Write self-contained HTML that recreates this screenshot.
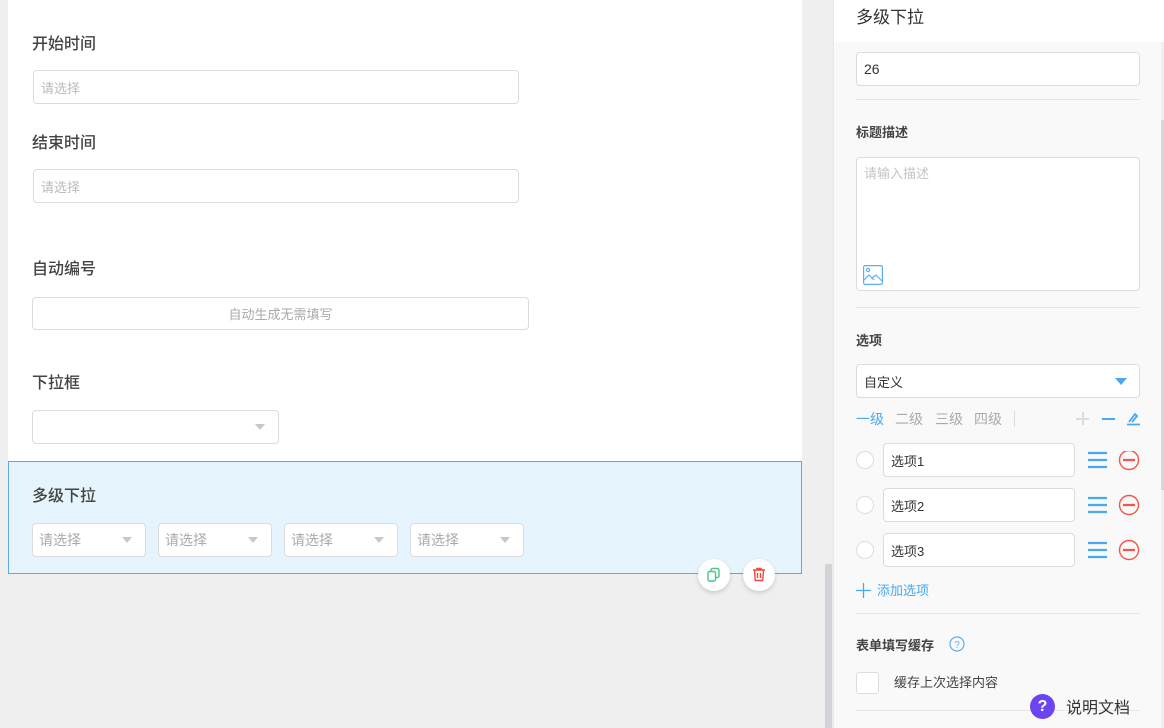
<!DOCTYPE html>
<html><head><meta charset="utf-8">
<style>
*{box-sizing:border-box;margin:0;padding:0}
body{width:1164px;height:728px;overflow:hidden;background:#efefef;font-family:"Liberation Sans","Noto Sans CJK SC",sans-serif;position:relative}
.a{position:absolute}
.lbl{position:absolute;font-size:16px;color:#444;font-weight:500}
.inp{position:absolute;background:#fff;border:1px solid #dcdcdc;border-radius:4px;font-size:13px;color:#bbb;padding-left:7px;display:flex;align-items:center}
.tri{position:absolute;width:0;height:0;border-left:5px solid transparent;border-right:5px solid transparent;border-top:6px solid #c8c8c8}
.rl{position:absolute;font-size:13px;color:#444;font-weight:bold}
.hr{position:absolute;left:856px;width:284px;height:1px;background:#e6e6e6}
</style></head><body>
<div class="a" style="left:8px;top:0;width:794px;height:461px;background:#fff"></div>
<div class="lbl" style="left:32px;top:30px">开始时间</div>
<div class="inp" style="left:33px;top:70px;width:486px;height:34px;padding-top:1px">请选择</div>
<div class="lbl" style="left:32px;top:129px">结束时间</div>
<div class="inp" style="left:33px;top:169px;width:486px;height:34px">请选择</div>
<div class="lbl" style="left:32px;top:255px">自动编号</div>
<div class="inp" style="left:32px;top:297px;width:497px;height:33px;justify-content:center;color:#aaa;padding:0">自动生成无需填写</div>
<div class="lbl" style="left:32px;top:369px">下拉框</div>
<div class="inp" style="left:32px;top:410px;width:247px;height:34px"></div>
<div class="tri" style="left:255px;top:424px"></div>

<div class="a" style="left:8px;top:461px;width:794px;height:113px;background:#e6f4fd;border:1px solid #5aa9ee"></div>
<div class="lbl" style="left:32px;top:482px">多级下拉</div>
<div class="inp" style="left:32px;top:523px;width:114px;height:34px;color:#aaa;font-size:14px;padding-left:6px">请选择</div><div class="tri" style="left:122px;top:537px"></div>
<div class="inp" style="left:158px;top:523px;width:114px;height:34px;color:#aaa;font-size:14px;padding-left:6px">请选择</div><div class="tri" style="left:248px;top:537px"></div>
<div class="inp" style="left:284px;top:523px;width:114px;height:34px;color:#aaa;font-size:14px;padding-left:6px">请选择</div><div class="tri" style="left:374px;top:537px"></div>
<div class="inp" style="left:410px;top:523px;width:114px;height:34px;color:#aaa;font-size:14px;padding-left:6px">请选择</div><div class="tri" style="left:500px;top:537px"></div>

<div class="a" style="left:698px;top:559px;width:32px;height:32px;border-radius:50%;background:#fff;box-shadow:0 2px 5px rgba(0,0,0,.15)">
<svg width="32" height="32" viewBox="0 0 32 32"><rect x="13" y="9.5" width="8" height="9" rx="1.5" fill="none" stroke="#4cc48e" stroke-width="1.4"/><rect x="10" y="12.5" width="7.5" height="9.5" rx="1.5" fill="#fff" stroke="#4cc48e" stroke-width="1.4"/></svg></div>
<div class="a" style="left:743px;top:559px;width:32px;height:32px;border-radius:50%;background:#fff;box-shadow:0 2px 5px rgba(0,0,0,.15)">
<svg width="32" height="32" viewBox="0 0 32 32" fill="none" stroke="#f5463c" stroke-width="1.4"><path d="M10 11h12M14 11V9.5h4V11M11.5 11.5l.8 10h7.4l.8-10M14.5 14v5M17.5 14v5"/></svg></div>

<div class="a" style="left:802px;top:0;width:31px;height:728px;background:#efefef"></div>
<div class="a" style="left:825px;top:564px;width:7px;height:164px;background:#d2d4d7"></div>

<div class="a" style="left:833px;top:0;width:331px;height:728px;background:#f9f9f9;border-left:1px solid #e8e8e8"></div>
<div class="a" style="left:834px;top:0;width:330px;height:42px;background:#fff"></div>
<div class="a" style="left:856px;top:3px;font-size:17px;color:#333">多级下拉</div>
<div class="a" style="left:1161px;top:42px;width:3px;height:686px;background:#f0f0f0"></div>
<div class="a" style="left:1161px;top:120px;width:3px;height:370px;background:#d6d6d6"></div>

<div class="inp" style="left:856px;top:52px;width:284px;height:34px;color:#333;font-size:14px">26</div>
<div class="hr" style="top:99px"></div>
<div class="rl" style="left:856px;top:122px">标题描述</div>
<div class="inp" style="left:856px;top:157px;width:284px;height:134px;align-items:flex-start;padding-top:5px;color:#c4c4c4">请输入描述</div>
<svg class="a" style="left:863px;top:265px" width="20" height="20" viewBox="0 0 20 20" fill="none" stroke="#5ab0f5" stroke-width="1.2"><rect x="0.6" y="0.6" width="18.8" height="18.8" rx="1.5"/><circle cx="5" cy="5" r="1.6"/><path d="M1 15l5-5 5 5M9 13l4-3 6 6"/></svg>
<div class="hr" style="top:307px"></div>
<div class="rl" style="left:856px;top:330px">选项</div>
<div class="inp" style="left:856px;top:364px;width:284px;height:34px;color:#333;font-size:13px">自定义</div>
<div class="tri" style="left:1115px;top:378px;border-top-color:#4aa8f0;border-left-width:6px;border-right-width:6px;border-top-width:7px"></div>
<div class="a" style="left:856px;top:409px;font-size:14px;color:#4aa8f0">一级</div>
<div class="a" style="left:895px;top:409px;font-size:14px;color:#aaa">二级</div>
<div class="a" style="left:935px;top:409px;font-size:14px;color:#aaa">三级</div>
<div class="a" style="left:974px;top:409px;font-size:14px;color:#aaa">四级</div>
<div class="a" style="left:1014px;top:411px;width:1px;height:16px;background:#ddd"></div>
<div class="a" style="left:1076px;top:418px;width:13px;height:2px;background:#ddd"></div><div class="a" style="left:1082px;top:412px;width:2px;height:13px;background:#ddd"></div>
<div class="a" style="left:1102px;top:418px;width:13px;height:2px;background:#4aa8f0"></div>
<svg class="a" style="left:1126px;top:411px" width="15" height="15" viewBox="0 0 15 15" fill="none" stroke="#4aa8f0" stroke-width="1.8"><path d="M1 13.5h13M3 11l6-8 2 2-5 6"/></svg>

<div class="a" style="left:856px;top:451px;width:18px;height:18px;border-radius:50%;background:#fff;border:1px solid #ddd"></div>
<div class="inp" style="left:883px;top:443px;width:192px;height:34px;color:#333;font-size:13px">选项1</div>
<div class="a" style="left:856px;top:496px;width:18px;height:18px;border-radius:50%;background:#fff;border:1px solid #ddd"></div>
<div class="inp" style="left:883px;top:488px;width:192px;height:34px;color:#333;font-size:13px">选项2</div>
<div class="a" style="left:856px;top:541px;width:18px;height:18px;border-radius:50%;background:#fff;border:1px solid #ddd"></div>
<div class="inp" style="left:883px;top:533px;width:192px;height:34px;color:#333;font-size:13px">选项3</div>
<svg class="a" style="left:1088px;top:451px" width="55" height="110" viewBox="0 0 55 110">
<g stroke="#4aa8f0" stroke-width="2.2"><path d="M0 2h19M0 9h19M0 16h19M0 47h19M0 54h19M0 61h19M0 92h19M0 99h19M0 106h19"/></g>
<g fill="none" stroke="#f5564a" stroke-width="1.4"><circle cx="41" cy="9" r="9.5"/><circle cx="41" cy="54" r="9.5"/><circle cx="41" cy="99" r="9.5"/></g>
<g stroke="#f5564a" stroke-width="2.2"><path d="M35 9h12M35 54h12M35 99h12"/></g></svg>
<svg class="a" style="left:856px;top:583px" width="15" height="15"><path d="M0 7.5h15M7.5 0v15" stroke="#4aa8f0" stroke-width="1.3"/></svg>
<div class="a" style="left:877px;top:580px;font-size:13px;color:#4aa8f0">添加选项</div>
<div class="hr" style="top:613px"></div>
<div class="rl" style="left:856px;top:635px">表单填写缓存</div>
<svg class="a" style="left:949px;top:636px" width="16" height="16" viewBox="0 0 16 16"><circle cx="8" cy="8" r="7" fill="none" stroke="#5ab0f5" stroke-width="1.2"/><text x="8" y="12" font-size="10" text-anchor="middle" fill="#5ab0f5" font-family="Liberation Sans">?</text></svg>
<div class="a" style="left:856px;top:672px;width:23px;height:22px;background:#fff;border:1px solid #ddd;border-radius:3px"></div>
<div class="a" style="left:894px;top:672px;font-size:13px;color:#444">缓存上次选择内容</div>
<div class="hr" style="top:710px"></div>
<div class="a" style="left:1030px;top:694px;width:25px;height:25px;border-radius:50%;background:#6b45f0;color:#fff;font-weight:bold;font-size:16px;text-align:center;line-height:25px">?</div>
<div class="a" style="left:1066px;top:694px;font-size:16px;color:#333">说明文档</div>
</body></html>
